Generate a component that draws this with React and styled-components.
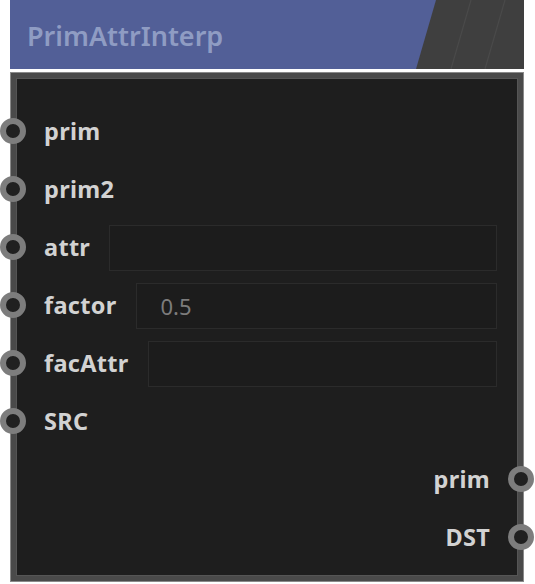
import React from "react";
import styled, { createGlobalStyle } from "styled-components";

const Global = createGlobalStyle`
  html, body { margin: 0; padding: 0; background: #ffffff; }
  body { font-family: "Noto Sans", "Open Sans", sans-serif; }
`;

const Node = styled.div`
  width: 514px;
  margin-left: 10px;
  display: flex;
  flex-direction: column;
  gap: 3px;
`;

const Header = styled.div`
  position: relative;
  height: 69px;
  background: #3f3f3f;
  overflow: hidden;
  display: flex;
  align-items: center;
`;

const HeaderBlue = styled.div`
  position: absolute;
  inset: 0;
  background: #525f97;
  clip-path: polygon(0 0, 426px 0, 406px 69px, 0 69px);
`;

const Stripes = styled.svg`
  position: absolute;
  inset: 0;
`;

const Title = styled.div`
  position: relative;
  padding-left: 17px;
  padding-top: 2px;
  font-size: 27px;
  font-weight: 600;
  color: #8f9cc3;
  letter-spacing: 0px;
`;

const Body = styled.div`
  box-sizing: border-box;
  height: 510px;
  background: #1e1e1e;
  border: 6px solid #4a4a4a;
  box-shadow: inset 0 0 0 1px #555;
  outline: 1px solid #8a8a8a;
  outline-offset: -1px;
  padding-top: 25px;
  display: flex;
  flex-direction: column;
`;

const Row = styled.div`
  position: relative;
  height: 58px;
  display: flex;
  align-items: center;
  justify-content: ${(p) => (p.$out ? "flex-end" : "flex-start")};
  gap: 19px;
  padding: ${(p) => (p.$out ? "0 28px 0 0" : "0 21px 0 28px")};
`;

const Socket = styled.div`
  position: absolute;
  top: 50%;
  ${(p) => (p.$out ? "right: -16px;" : "left: -16px;")}
  width: 26px;
  height: 26px;
  margin-top: -14px;
  box-sizing: border-box;
  border-radius: 50%;
  border: 6px solid #7d7d7d;
  background: #202020;
`;

const Label = styled.span`
  font-size: 23.5px;
  font-weight: 700;
  color: #d2d2d2;
  white-space: nowrap;
  margin-top: -2px;
  letter-spacing: 0.3px;
`;

const Field = styled.div`
  flex: 1;
  height: 46px;
  box-sizing: border-box;
  border: 1px solid #2b2b2b;
  background: #1c1c1c;
  display: flex;
  align-items: center;
  padding-left: 24px;
  font-size: 22px;
  color: #7c7c7c;
  font-family: "Noto Sans", sans-serif;
`;

const inputs = [
  { name: "prim" },
  { name: "prim2" },
  { name: "attr", field: "" },
  { name: "factor", field: "0.5" },
  { name: "facAttr", field: "" },
  { name: "SRC" },
];
const outputs = ["prim", "DST"];

export default function App() {
  return (
    <>
      <Global />
      <Node>
        <Header>
          <HeaderBlue />
          <Stripes width="514" height="69" viewBox="0 0 514 69">
            <line x1="461" y1="0" x2="441" y2="69" stroke="#4a4a4a" strokeWidth="1.2" />
            <line x1="495" y1="0" x2="475" y2="69" stroke="#4a4a4a" strokeWidth="1.2" />
          </Stripes>
          <Title>PrimAttrInterp</Title>
        </Header>
        <Body>
          {inputs.map((s) => (
            <Row key={s.name}>
              <Socket />
              <Label>{s.name}</Label>
              {s.field !== undefined && <Field>{s.field}</Field>}
            </Row>
          ))}
          {outputs.map((s) => (
            <Row key={"o" + s} $out>
              <Label>{s}</Label>
              <Socket $out />
            </Row>
          ))}
        </Body>
      </Node>
    </>
  );
}
